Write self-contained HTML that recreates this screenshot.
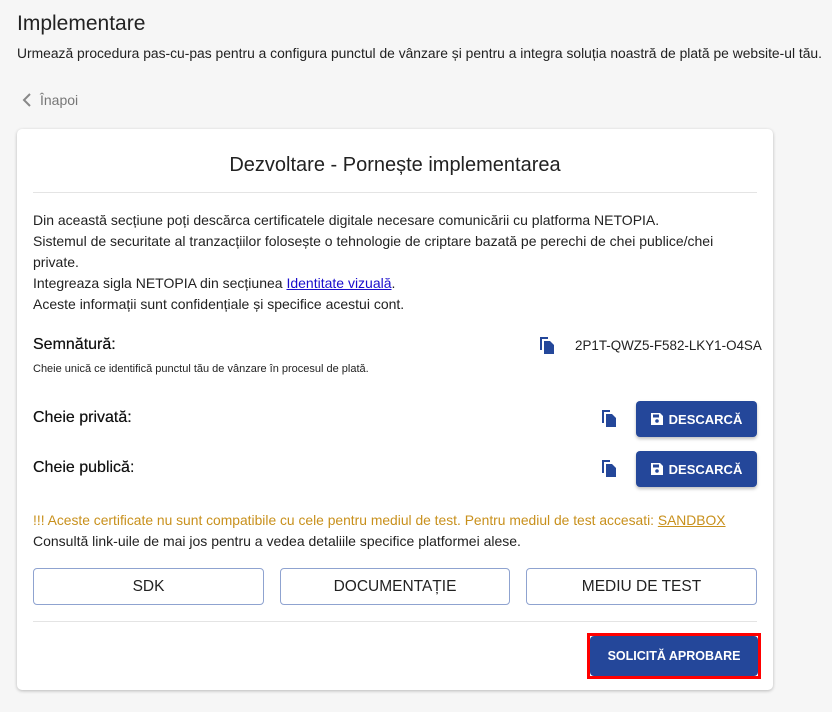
<!DOCTYPE html>
<html><head><meta charset="utf-8"><style>
*{box-sizing:border-box;margin:0;padding:0}
body{width:832px;height:712px;background:#f6f6f6;font-family:"Liberation Sans",sans-serif;color:#222;position:relative;overflow:hidden}
.a{position:absolute;white-space:nowrap}
.card{position:absolute;left:17px;top:129px;width:756px;height:561px;background:#fff;border-radius:5px;box-shadow:0 1px 3px rgba(0,0,0,.25)}
.hr{position:absolute;left:16px;width:724px;height:1px;background:#e4e4e4}
.p{font-size:14px;color:#222}
.lb{font-size:16px;color:#111;text-shadow:0 0 .4px #111}
.btn{position:absolute;background:#24479a;color:#fff;border-radius:4px;font-size:13px;font-weight:bold;display:flex;align-items:center;justify-content:center;box-shadow:0 2px 3px rgba(0,0,0,.25)}
.ob{position:absolute;top:439px;height:37px;border:1px solid #8fa3d0;border-radius:4px;font-size:15.5px;display:flex;align-items:center;justify-content:center;color:#222}
</style></head><body>
<div class="a" style="left:17px;top:12px;font-size:21px;color:#222">Implementare</div>
<div class="a p" style="left:17px;top:45px;font-size:13.85px">Urmează procedura pas-cu-pas pentru a configura punctul de vânzare și pentru a integra soluția noastră de plată pe website-ul tău.</div>
<svg class="a" style="left:20px;top:92px" width="12" height="16" viewBox="0 0 12 16"><path d="M10 2 L4 8 L10 14" fill="none" stroke="#888" stroke-width="2"/></svg>
<div class="a" style="left:40px;top:92px;font-size:14px;color:#777">Înapoi</div>
<div class="card">
<div class="a" style="left:0;width:756px;text-align:center;top:25px;font-size:20px;color:#222">Dezvoltare - Pornește implementarea</div>
<div class="hr" style="top:63px"></div>
<div class="a p" style="left:16px;top:81px;line-height:21px;white-space:normal;width:700px">Din această secțiune poți descărca certificatele digitale necesare comunicării cu platforma NETOPIA.<br>Sistemul de securitate al tranzacțiilor folosește o tehnologie de criptare bazată pe perechi de chei publice/chei private.<br>Integreaza sigla NETOPIA din secțiunea <span style="color:#1a0dcc;text-decoration:underline">Identitate vizuală</span>.<br>Aceste informații sunt confidențiale și specifice acestui cont.</div>
<div class="a lb" style="left:16px;top:207px">Semnătură:</div>
<div class="a" style="left:16px;top:234px;font-size:11px">Cheie unică ce identifică punctul tău de vânzare în procesul de plată.</div>
<svg class="a" style="left:522px;top:207px" width="16" height="18" viewBox="0 0 16 18"><path d="M1 1h8v2H3v11H1z" fill="#24479a"/><path d="M5 5h6l4 4v9H5z" fill="#24479a"/></svg>
<div class="a" style="left:558px;top:209px;font-size:13.4px">2P1T-QWZ5-F582-LKY1-O4SA</div>
<div class="a lb" style="left:16px;top:280px">Cheie privată:</div>
<svg class="a" style="left:584px;top:280px" width="16" height="18" viewBox="0 0 16 18"><path d="M1 1h8v2H3v11H1z" fill="#24479a"/><path d="M5 5h6l4 4v9H5z" fill="#24479a"/></svg>
<div class="btn" style="left:619px;top:272px;width:121px;height:36px"><svg width="12" height="12" viewBox="0 0 12 12" style="margin-right:6px"><path d="M0 0h9l3 3v9H0z" fill="#fff"/><rect x="2" y="1.5" width="6" height="3" fill="#24479a"/><circle cx="6" cy="8" r="1.8" fill="#24479a"/></svg>DESCARCĂ</div>
<div class="a lb" style="left:16px;top:330px">Cheie publică:</div>
<svg class="a" style="left:584px;top:330px" width="16" height="18" viewBox="0 0 16 18"><path d="M1 1h8v2H3v11H1z" fill="#24479a"/><path d="M5 5h6l4 4v9H5z" fill="#24479a"/></svg>
<div class="btn" style="left:619px;top:322px;width:121px;height:36px"><svg width="12" height="12" viewBox="0 0 12 12" style="margin-right:6px"><path d="M0 0h9l3 3v9H0z" fill="#fff"/><rect x="2" y="1.5" width="6" height="3" fill="#24479a"/><circle cx="6" cy="8" r="1.8" fill="#24479a"/></svg>DESCARCĂ</div>
<div class="a" style="left:16px;top:383px;font-size:13.85px;color:#c8901c">!!! Aceste certificate nu sunt compatibile cu cele pentru mediul de test. Pentru mediul de test accesati: <span style="text-decoration:underline">SANDBOX</span></div>
<div class="a p" style="left:16px;top:404px">Consultă link-uile de mai jos pentru a vedea detaliile specifice platformei alese.</div>
<div class="ob" style="left:16px;width:231px">SDK</div>
<div class="ob" style="left:263px;width:230px">DOCUMENTAȚIE</div>
<div class="ob" style="left:509px;width:231px">MEDIU DE TEST</div>
<div class="hr" style="top:492px"></div>
<div class="a" style="left:570px;top:504px;width:174px;height:46px;border:3px solid #f00"></div>
<div class="btn" style="left:573px;top:507px;width:168px;height:40px;box-shadow:none;font-size:12.5px">SOLICITĂ APROBARE</div>
</div>
</body></html>
